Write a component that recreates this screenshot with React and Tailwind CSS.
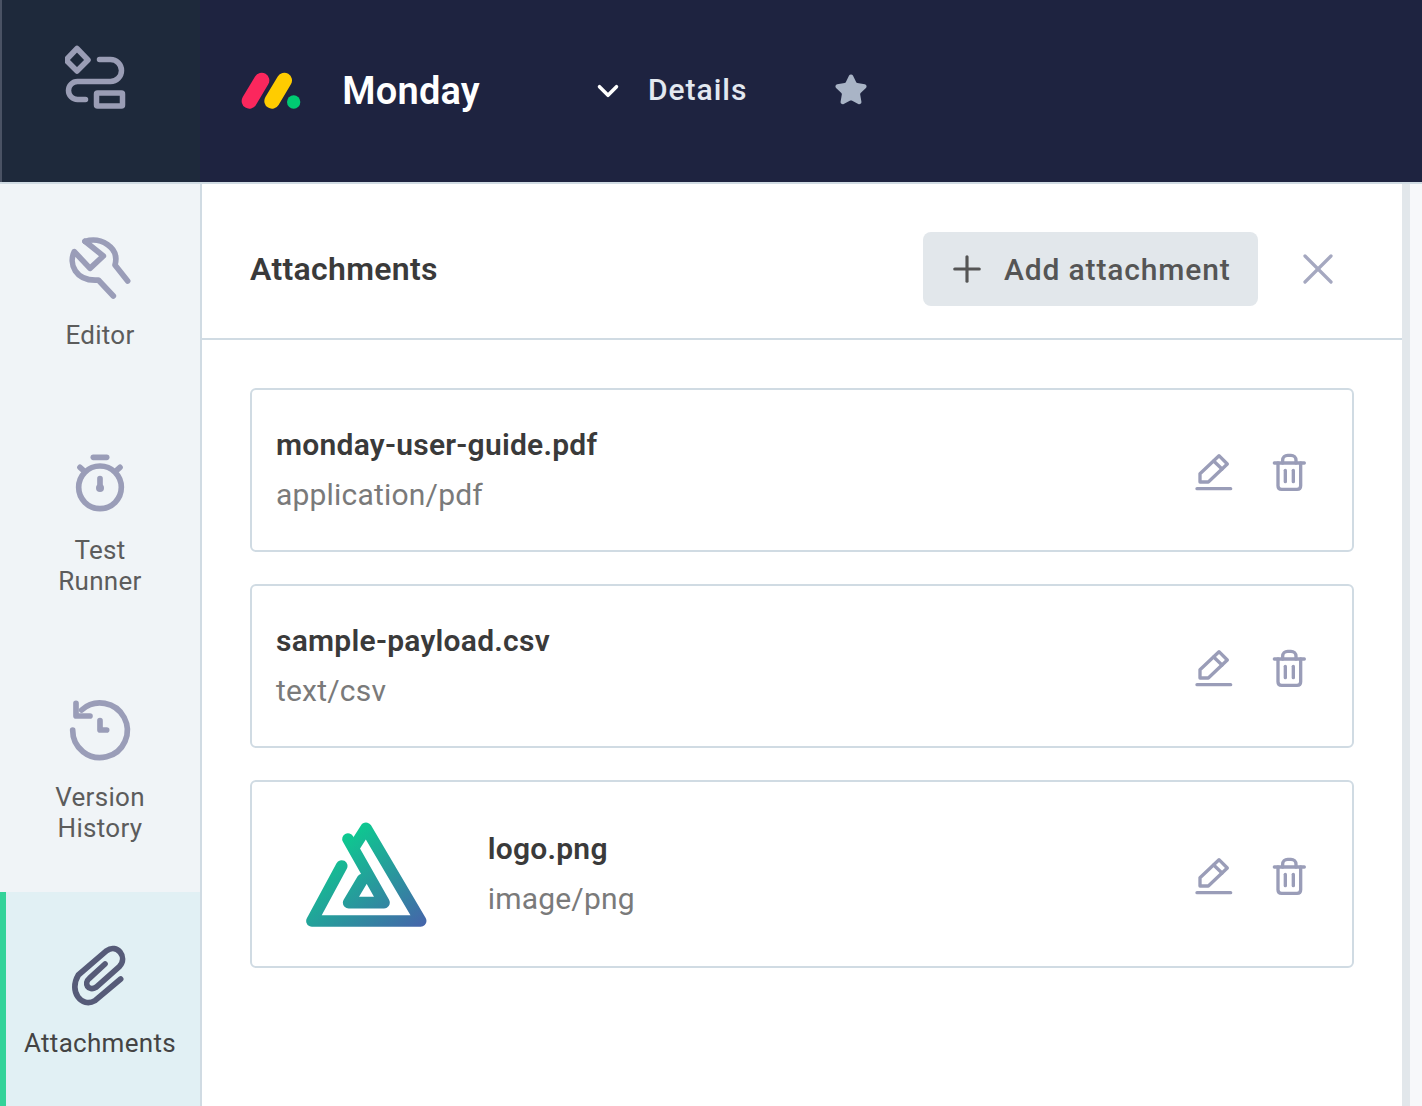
import { ChevronDown, Plus, Star, X } from "lucide-react";

const navItems = [
  { label: ["Editor"], height: "h-[215px]", icon: WrenchIcon },
  { label: ["Test", "Runner"], height: "h-[247px]", icon: TimerIcon },
  { label: ["Version", "History"], height: "h-[246px]", icon: HistoryIcon },
];

function AppLogo() {
  return (
    <svg width="72" height="72" viewBox="65.5 44 72 72" fill="none" stroke="#9a9db5" strokeWidth="5.5" strokeLinecap="round" strokeLinejoin="round">
      <path d="M77.5 48.5 L88.5 60 L77.5 71 L66.5 60 Z" />
      <path d="M100 59.5 H111 A11 11 0 0 1 111 81.5 H78 A9 9 0 0 0 78 99.5 H86" />
      <rect x="97" y="93" width="26" height="13" rx="1" />
    </svg>
  );
}

function MondayLogo() {
  return (
    <svg width="63.33" height="40" viewBox="720 210 190 120" fill="none" strokeLinecap="round">
      <path d="M785 238 L748 300" stroke="#fb275d" strokeWidth="46" />
      <path d="M853 238 L816 300" stroke="#ffcc00" strokeWidth="46" />
      <circle cx="881" cy="303" r="20" fill="#00ca72" />
    </svg>
  );
}

function WrenchIcon() {
  return (
    <svg width="72" height="72" viewBox="72 36 216 216" fill="none" stroke="#9a9db8" strokeWidth="17" strokeLinecap="round" strokeLinejoin="round">
      <path d="M135 64 L190 108 L150 145 L103 95 C85 130 105 185 175 180 L220 228" />
      <path d="M135 64 C180 50 240 80 225 135 L263 183" />
    </svg>
  );
}

function TimerIcon() {
  return (
    <svg width="72" height="72" viewBox="72 681 216 216" fill="none" stroke="#9a9db8" strokeWidth="17" strokeLinecap="round">
      <circle cx="180" cy="802" r="64" />
      <path d="M160 712 H200" />
      <path d="M120 742 L130 751" />
      <path d="M240 742 L230 751" />
      <path d="M180 776 V804" />
      <circle cx="180" cy="804" r="12" fill="#9a9db8" stroke="none" />
    </svg>
  );
}

function HistoryIcon() {
  return (
    <svg width="72" height="72" viewBox="192 42 216 216" fill="none" stroke="#9a9db8" strokeWidth="17" strokeLinecap="round" strokeLinejoin="round">
      <path d="M218 150 A82 82 0 1 0 245 90" />
      <path d="M228 70 V108 H270" />
      <path d="M300 122 V150 H320" />
    </svg>
  );
}

function ClipIcon() {
  return (
    <svg width="72" height="72" viewBox="192 780 216 216" fill="none" stroke="#565b78" strokeWidth="17" strokeLinecap="round" strokeLinejoin="round">
      <path d="M362 897 L285 962 C245 985 205 935 235 885 L320 812 C350 790 385 830 358 860 L288 922 C265 935 250 910 268 895 L315 852" />
    </svg>
  );
}

function PencilIcon() {
  return (
    <svg className="w-[41.67px] h-[40px]" viewBox="40 35 125 120" fill="none" stroke="#9a9db8" strokeWidth="10" strokeLinecap="round" strokeLinejoin="round">
      <path d="M61 125 V100 L118 46 L143 71 L86 125 Z" />
      <path d="M102 62 L127 86" />
      <path d="M52 145 H153" />
    </svg>
  );
}

function TrashIcon() {
  return (
    <svg className="w-[36.67px] h-[40px]" viewBox="275 35 110 120" fill="none" stroke="#9a9db8" strokeWidth="10" strokeLinecap="round" strokeLinejoin="round">
      <path d="M285 68 H375" />
      <path d="M310 68 V60 A15 15 0 0 1 325 45 H335 A15 15 0 0 1 350 60 V68" />
      <path d="M296 68 V136 Q296 147 307 147 H353 Q364 147 364 136 V68" />
      <path d="M318 90 V124" />
      <path d="M342 90 V124" />
    </svg>
  );
}

function SketchLogo() {
  return (
    <svg className="w-[121.67px] h-[106.67px] shrink-0" viewBox="45 30 365 320" fill="none" strokeWidth="35" strokeLinecap="round" strokeLinejoin="round">
      <defs>
        <linearGradient id="logoGrad" gradientUnits="userSpaceOnUse" x1="170" y1="60" x2="400" y2="345">
          <stop offset="0" stopColor="#0ccb8f" />
          <stop offset="1" stopColor="#4565aa" />
        </linearGradient>
      </defs>
      <path d="M155 165 L66 330 H392 L228 52 L195 104" stroke="url(#logoGrad)" />
      <path d="M174 84 L282 275 H176 L218 205" stroke="url(#logoGrad)" />
    </svg>
  );
}

function NavItem({ item }) {
  const Icon = item.icon;
  return (
    <div className={`${item.height} flex flex-col items-center pt-12`}>
      <Icon />
      <div className="mt-4 text-center text-[26px] leading-[31px] tracking-[0.3px] text-[#5c5c5c]">
        {item.label.map((line) => (
          <div key={line}>{line}</div>
        ))}
      </div>
    </div>
  );
}

function AttachmentCard({ name, type, logo }) {
  return (
    <div className={`flex items-center rounded-md border-2 border-[#d0dbe3] ${logo ? "h-[188px] pl-[53px]" : "h-[164px] pl-6"} pr-[44px]`}>
      {logo && <SketchLogo />}
      <div className={`flex-1 ${logo ? "ml-[61px]" : ""}`}>
        <div className="text-[30px] leading-[50px] font-semibold tracking-[0.25px] text-[#3a3a3a]">{name}</div>
        <div className="text-[30px] leading-[50px] tracking-[0.2px] text-[#7a7a7a]">{type}</div>
      </div>
      <div className="mt-1 flex items-center gap-[37px]">
        <PencilIcon />
        <TrashIcon />
      </div>
    </div>
  );
}

export default function App() {
  return (
    <div className="flex h-[1106px] w-[1422px] flex-col overflow-hidden bg-white font-['Roboto',sans-serif]">
      {/* Top bar */}
      <div className="flex h-[184px] shrink-0 items-center border-b-2 border-[#d0dbe3] bg-[#1e2340]">
        <div className="flex h-full w-[200px] items-start justify-center border-l-2 border-[#4a5264] bg-[#1e293b] pt-[44px]">
          <AppLogo />
        </div>
        <div className="ml-10 flex items-center">
          <MondayLogo />
        </div>
        <div className="ml-[39px] text-[38px] font-semibold tracking-[0.2px] text-white">Monday</div>
        <ChevronDown className="ml-[111px] text-white" size={34} strokeWidth={2.5} />
        <div className="ml-[23px] -mt-[3px] text-[30px] font-medium tracking-[1px] text-[#e2e8f0]">Details</div>
        <Star className="ml-[87px] -mt-[2px] text-[#a9b4c6]" fill="#a9b4c6" size={34} />
      </div>

      <div className="flex min-h-0 flex-1">
        {/* Sidebar */}
        <div className="flex w-[202px] shrink-0 flex-col border-r-2 border-[#d0dbe3] bg-[#f0f4f7]">
          {navItems.map((item) => (
            <NavItem key={item.label[0]} item={item} />
          ))}
          <div className="flex flex-1 flex-col items-center border-l-[6px] border-[#33d399] bg-[#e1f0f4] pt-12 pr-[6px]">
            <ClipIcon />
            <div className="mt-4 text-[26px] leading-[31px] tracking-[0.3px] text-[#444]">Attachments</div>
          </div>
        </div>

        {/* Content */}
        <div className="flex min-w-0 flex-1 flex-col">
          <div className="flex h-[156px] shrink-0 items-center border-b-2 border-[#d0dbe3] pl-12 pr-[58px] pt-4">
            <div className="flex-1 text-[32px] font-semibold tracking-[0.3px] text-[#3a3a3a]">Attachments</div>
            <button className="flex h-[74px] w-[335px] items-center rounded-lg bg-[#e2e7eb] pl-[23px] text-[30px] font-medium tracking-[0.85px] text-[#555]">
              <Plus size={42} strokeWidth={1.8} className="text-[#555]" />
              <span className="ml-[16px]">Add attachment</span>
            </button>
            <X size={52} strokeWidth={1.5} className="ml-[34px] text-[#a5a8c0]" />
          </div>
          <div className="flex flex-col gap-8 pl-12 pr-12 pt-12">
            <AttachmentCard name="monday-user-guide.pdf" type="application/pdf" />
            <AttachmentCard name="sample-payload.csv" type="text/csv" />
            <AttachmentCard name="logo.png" type="image/png" logo />
          </div>
        </div>

        {/* Scrollbar track */}
        <div className="flex w-5 shrink-0">
          <div className="w-2 bg-[#e2e7eb]" />
          <div className="flex-1 bg-[#f7f8fa]" />
        </div>
      </div>
    </div>
  );
}
